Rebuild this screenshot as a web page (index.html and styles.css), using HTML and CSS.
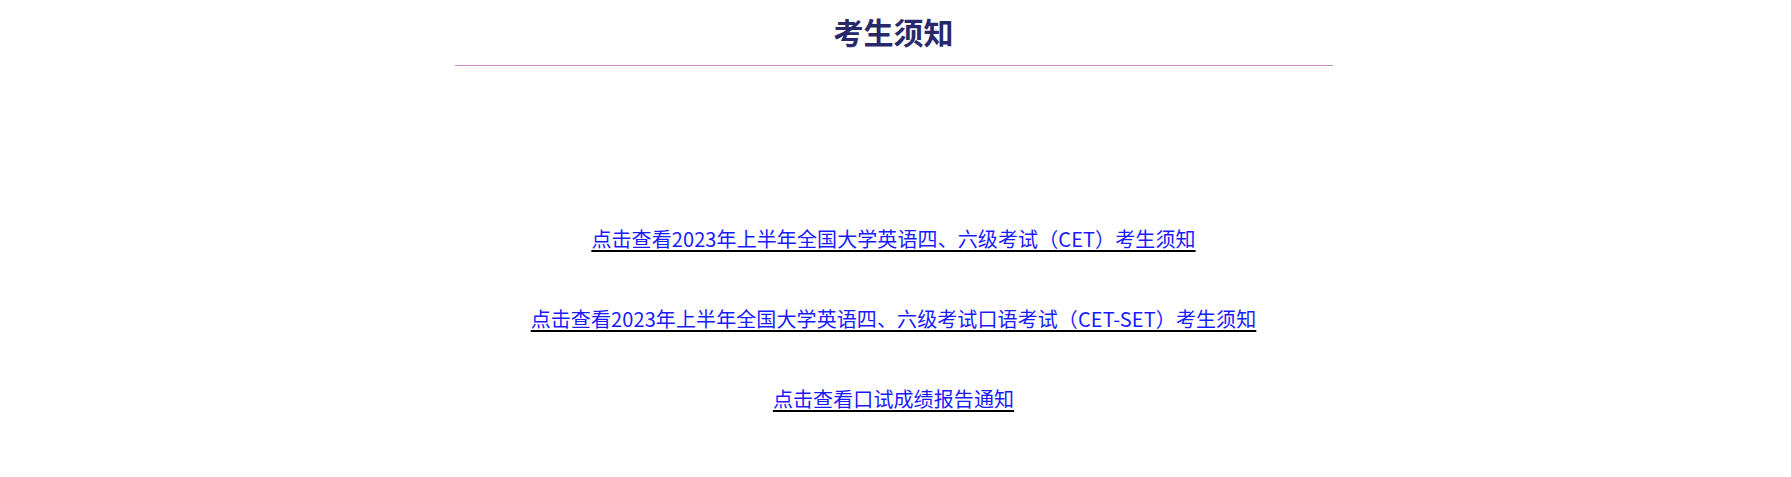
FILE: index.html
```html
<!DOCTYPE html>
<html lang="zh-CN">
<head>
<meta charset="utf-8">
<title>考生须知</title>
<link rel="stylesheet" href="styles.css">
</head>
<body>
<div class="page">
  <h2 class="title">考生须知</h2>
  <div class="links">
    <p class="item"><a class="link" href="#"><span class="link-text">点击查看2023年上半年全国大学英语四、六级考试（CET）考生须知</span></a></p>
    <p class="item"><a class="link" href="#"><span class="link-text">点击查看2023年上半年全国大学英语四、六级考试口语考试（CET-SET）考生须知</span></a></p>
    <p class="item"><a class="link" href="#"><span class="link-text">点击查看口试成绩报告通知</span></a></p>
  </div>
</div>
</body>
</html>
```
FILE: styles.css
```css
html, body {
  margin: 0;
  padding: 0;
  background: #ffffff;
}
body {
  font-family: "Noto Sans CJK SC", "Noto Sans", sans-serif;
  padding-right: 4px;
}
.page {
  width: 878px;
  margin: 0 auto;
}
.title {
  margin: 0;
  padding: 11px 0 13px;
  line-height: 41px;
  font-size: 30px;
  font-weight: bold;
  color: #27296a;
  text-align: center;
  border-bottom: 1px solid #c890c8;
}
.links {
  padding-top: 158px;
  display: flex;
  flex-direction: column;
  gap: 50px;
}
.item {
  margin: 0;
  text-align: center;
  font-size: 20px;
  line-height: 30px;
  letter-spacing: 0.1px;
}
.link {
  color: #000000;
  text-decoration: underline;
  text-decoration-thickness: 2px;
  text-underline-offset: 3px;
}
.link-text {
  color: #1a1aff;
}
```
